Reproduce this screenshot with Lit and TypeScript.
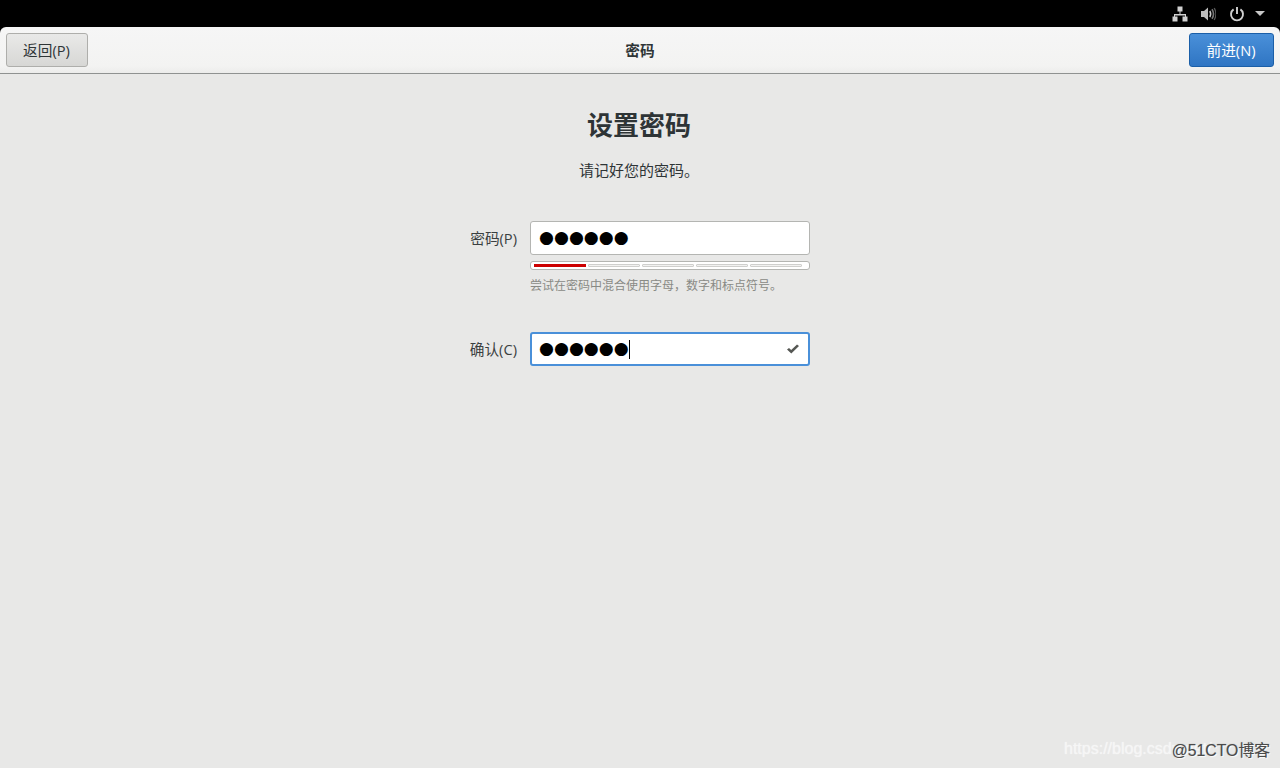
import { LitElement, html, css } from "lit";
import { customElement } from "lit/decorators.js";

@customElement("app-root")
export class AppRoot extends LitElement {
  static styles = css`
    :host { display: flex; flex-direction: column; width: 1280px; height: 768px; position: relative; overflow: hidden; background: #e8e8e7; font-family: "Open Sans", "Noto Sans CJK SC", sans-serif; color: #2e3436; font-size: 14.67px; }
    .top { height: 27px; background: #000; display: flex; align-items: center; justify-content: flex-end; flex: none; }
    .top svg { display: block; }
    .net { margin-right: 12px; }
    .vol { margin-right: 13px; }
    .pow { margin-right: 10px; }
    .arrow { margin-right: 15px; }
    .headwrap { background: #000; flex: none; }
    .header { height: 47px; box-sizing: border-box; display: grid; grid-template-columns: 1fr auto 1fr; align-items: center; padding: 0 6px; background: linear-gradient(#f6f6f6, #f3f3f2 85%, #ececeb); border-bottom: 1px solid #8f9291; border-radius: 6px 6px 0 0; }
    .btn { box-sizing: border-box; height: 34px; border-radius: 3px; display: flex; align-items: center; justify-content: center; font-size: 14.67px; padding: 0 1px 2px 0; }
    .back { width: 82px; justify-self: start; border: 1px solid #aeaeab; background: linear-gradient(#e9e9e8, #d7d7d5); color: #2e3436; }
    .next { width: 85px; justify-self: end; border: 1px solid #1b5fa8; background: linear-gradient(#4a90d9, #2f75c3); color: #fff; }
    .htitle { font-weight: 700; font-size: 14.67px; padding-bottom: 2px; }
    .main { flex: 1; display: flex; flex-direction: column; align-items: center; padding-top: 32px; }
    h1 { margin: 0; padding-right: 2px; font-size: 26px; line-height: 38px; font-weight: 700; color: #2e3436; }
    .sub { margin: 15px 0 0; padding-right: 2px; font-size: 15px; line-height: 22px; }
    .form { margin-top: 40px; display: grid; grid-template-columns: 61px 280px; column-gap: 12px; margin-left: -13px; }
    .lab { box-sizing: border-box; display: flex; align-items: center; justify-content: flex-end; height: 34px; padding: 0 1px 2px 0; color: #3a3f41; }
    .entry { box-sizing: border-box; height: 34px; border: 1px solid #b4b5b2; border-radius: 3px; background: #fff; display: flex; align-items: center; padding-left: 8px; position: relative; }
    .dots { font-family: "DejaVu Sans", sans-serif; font-size: 17.15px; color: #000; line-height: 1; }
    .entry.focus { border: 2px solid #4a90d9; padding-left: 7px; }
    .caret { width: 1px; height: 19px; background: #000; }
    .check { position: absolute; right: 8px; top: 9px; }
    .strength { box-sizing: border-box; grid-column: 2; margin-top: 6px; height: 9px; border: 1px solid #b4b5b2; border-radius: 3px; background: #fff; padding: 2px 3px; display: grid; grid-template-columns: repeat(5, 52px); column-gap: 2px; }
    .seg { background: #f2f2f1; border: 1px solid #cfcfcd; border-radius: 1px; height: 3px; box-sizing: border-box; }
    .seg.on { background: #cc0000; border: 0; border-radius: 0; }
    .hint { grid-column: 2; margin-top: 8px; font-size: 12px; line-height: 16px; color: #888a85; white-space: nowrap; height: 54px; }
    .wm { position: absolute; right: 10px; bottom: 7px; font-family: "Liberation Sans", "Noto Sans CJK SC", sans-serif; font-size: 15.8px; color: #4a4a4a; text-shadow: 1px 1px 1px #fff, 0 0 1px #888; }
    .wm2 { position: absolute; left: 1064px; bottom: 10px; white-space: nowrap; font-family: "Liberation Sans", "Noto Sans CJK SC", sans-serif; font-size: 16px; color: #f6f6f6; text-shadow: 0 0 1px #f6f6f6; }
  `;

  render() {
    return html`
      <div class="top">
        <svg class="net" width="16" height="16" viewBox="0 0 16 16" fill="#d0d0d0"><rect x="5.5" y="0.5" width="5" height="5"/><rect x="0.5" y="10.5" width="5" height="5"/><rect x="10.5" y="10.5" width="5" height="5"/><path d="M7.5 5h1v3h5.5v3h-1V9.5H3V11H2V8h5.5z"/></svg>
        <svg class="vol" width="16" height="16" viewBox="0 0 16 16"><path fill="#bdbdbd" d="M1 5h3l4-3.5v13L4 11H1z"/><path fill="none" stroke="#c8c8c8" stroke-width="1.5" d="M9.8 5c1.2 2 1.2 4 0 6"/><path fill="none" stroke="#777" stroke-width="1.6" d="M12 3.2c1.9 3 1.9 6.6 0 9.6"/><path fill="none" stroke="#555" stroke-width="1.3" d="M14.2 2c2.2 3.8 2.2 8.2 0 12"/></svg>
        <svg class="pow" width="16" height="16" viewBox="0 0 16 16" fill="none" stroke="#d0d0d0" stroke-width="1.9"><path d="M4.6 3.4a6 6 0 1 0 6.8 0"/><path d="M8 1v7"/></svg>
        <svg class="arrow" width="10" height="5" viewBox="0 0 10 5" fill="#c8c8c8"><path d="M0 0h10L5 5z"/></svg>
      </div>
      <div class="headwrap">
        <div class="header">
          <div class="btn back">返回(P)</div>
          <div class="htitle">密码</div>
          <div class="btn next">前进(N)</div>
        </div>
      </div>
      <div class="main">
        <h1>设置密码</h1>
        <p class="sub">请记好您的密码。</p>
        <div class="form">
          <div class="lab">密码(P)</div>
          <div class="entry"><span class="dots">●●●●●●</span></div>
          <div class="strength">
            <div class="seg on"></div><div class="seg"></div><div class="seg"></div><div class="seg"></div><div class="seg"></div>
          </div>
          <div class="hint">尝试在密码中混合使用字母，数字和标点符号。</div>
          <div class="lab">确认(C)</div>
          <div class="entry focus"><span class="dots">●●●●●●</span><span class="caret"></span>
            <svg class="check" width="14" height="12" viewBox="0 0 14 12"><path fill="#555753" d="M1 6.5 3 5l2.2 2L11 1.5 13 3 5.3 10.5z"/></svg>
          </div>
        </div>
      </div>
      <div class="wm2">https://blog.csdn.net/</div>
      <div class="wm">@51CTO博客</div>
    `;
  }
}
